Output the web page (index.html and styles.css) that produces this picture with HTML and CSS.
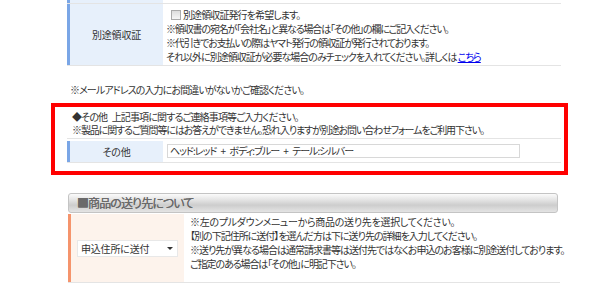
FILE: index.html
```html
<!DOCTYPE html>
<html lang="ja">
<head>
<meta charset="utf-8">
<link rel="stylesheet" href="styles.css">
</head>
<body>
<div class="wrap">
  <div class="tbl tbl-blue">
    <div class="row row-stub">
      <div class="label"></div>
      <div class="cell"></div>
    </div>
    <div class="row row-receipt">
      <div class="label">別途領収証</div>
      <div class="cell text">
        <span class="chk"></span><span class="t1">別途領収証発行を希望します。</span><br>
        <span class="t2">※領収書の宛名が「会社名」と異なる場合は「その他」の欄にご記入ください。</span><br>
        <span class="t3">※代引きでお支払いの際はヤマト発行の領収証が発行されております。</span><br>
        それ以外に別途領収証が必要な場合のみチェックを入れてください。詳しくは <a href="#">こちら</a>
      </div>
    </div>
  </div>

  <p class="note">※メールアドレスの入力にお間違いがないかご確認ください。</p>

  <div class="redbox">
    <p class="redtext"><span class="r1">◆その他 上記事項に関するご連絡事項等ご入力ください。</span><br><span class="r2">※製品に関するご質問等にはお答えができません。恐れ入りますが別途お問い合わせフォームをご利用下さい。</span></p>
    <div class="tbl tbl-blue">
      <div class="row row-other">
        <div class="label">その他</div>
        <div class="cell"><div class="input">ヘッド:レッド + ボディ:ブルー + テール:シルバー</div></div>
      </div>
    </div>
  </div>

  <div class="section">
    <div class="sec-head">■商品の送り先について</div>
    <div class="tbl tbl-orange">
      <div class="row row-ship">
        <div class="label"><div class="select"><span>申込住所に送付</span><span class="arrow"></span></div></div>
        <div class="cell text small">
          <span class="s1">※左のプルダウンメニューから商品の送り先を選択してください。</span><br>
          【別の下記住所に送付】を選んだ方は下に送り先の詳細を入力してください。<br>
          ※送り先が異なる場合は通常請求書等は送付先ではなくお申込のお客様に別途送付しております。<br>
          <span class="s4">ご指定のある場合は「その他」に明記下さい。</span>
        </div>
      </div>
    </div>
  </div>
</div>
</body>
</html>
```

FILE: styles.css
```css
* { box-sizing: border-box; }
html, body { margin: 0; padding: 0; background: #fff; }
body {
  font-family: "Noto Sans CJK JP", "Noto Sans", sans-serif;
  font-size: 10px;
  color: #333;
  font-feature-settings: "palt";
}
.wrap { width: 517px; margin-left: 51px; }

.tbl { width: 494px; margin-left: 16px; }
.row { display: flex; border-bottom: 1px solid #e4e4e4; }
.label {
  width: 96px;
  flex: none;
  display: flex;
  align-items: center;
  justify-content: center;
  letter-spacing: -0.2px;
}
.tbl-blue .label { background: #e7f0fb; border-left: 3px solid #7aa6e6; }
.cell { flex: 1; }
.text { line-height: 14px; white-space: nowrap; }

.row-stub { height: 4px; }
.row-receipt { height: 62px; }
.row-receipt .cell { padding: 4px 0 0 3px; letter-spacing: -1px; }
.t1 { letter-spacing: -0.9px; }
.t2 { letter-spacing: -1.15px; }
.t3 { letter-spacing: -1.15px; }
.chk {
  display: inline-block;
  width: 10px; height: 10px;
  border: 1px solid #aaa;
  background: linear-gradient(#ddd, #f6f6f6);
  vertical-align: -1px;
  margin: 0 2px 0 5px;
}
a { color: #0000ee; }

.note { margin: 17px 0 0 19px; line-height: 14px; letter-spacing: -0.9px; }

.redbox {
  margin-top: 6px;
  border: 4px solid #f00;
  padding: 3px 3px 8px 12px;
}
.redbox .tbl { margin-left: 0; }
.redtext {
  margin: 0;
  padding-left: 5px;
  line-height: 13px;
  padding-bottom: 2px;
  border-bottom: 1px solid #e4e4e4;
  white-space: nowrap;
}
.r1 { letter-spacing: -0.85px; word-spacing: 3px; }
.r2 { letter-spacing: -1.1px; }
.row-other { height: 22px; margin-top: 2px; }
.row-other .cell { padding: 3px 0 0 4px; }
.input {
  width: 353px; height: 14px;
  border: 1px solid #d8d8d8;
  line-height: 12px;
  padding-left: 2px;
  letter-spacing: -1px;
  word-spacing: 3px;
}

.section { margin-top: 18px; margin-left: 17px; }
.sec-head {
  width: 490px; height: 20px;
  border: 1px solid #c4c4c4;
  border-radius: 3px;
  background: linear-gradient(#fbfbfb 0%, #e6e6e6 30%, #cdcdcd 62%, #e4e4e4 100%);
  color: #6a6a6a;
  font-size: 12px;
  line-height: 18px;
  padding-left: 8px;
  letter-spacing: -0.9px;
  text-shadow: 0 0 0.3px #666;
}
.section .tbl { margin-left: 0; width: 492px; margin-top: 1px; }
.tbl-orange .label {
  width: 116px;
  background: #fdf3ec;
  border-left: 3px solid #f5946c;
  justify-content: flex-start;
  padding-left: 6px;
}
.row-ship { height: 69px; }
.row-ship .cell { padding: 1px 0 0 6px; }
.small { letter-spacing: -1px; }
.s1 { letter-spacing: -0.3px; }
.s4 { letter-spacing: -1.1px; }
.select {
  width: 101px; height: 17px;
  background: #fff;
  border: 1px solid #e8e8e8;
  display: flex; align-items: center; justify-content: space-between;
  padding: 0 4px 0 3px;
  font-size: 10px;
  letter-spacing: -0.2px;
}
.arrow {
  width: 0; height: 0;
  border-left: 3px solid transparent;
  border-right: 3px solid transparent;
  border-top: 3px solid #333;
}
```
